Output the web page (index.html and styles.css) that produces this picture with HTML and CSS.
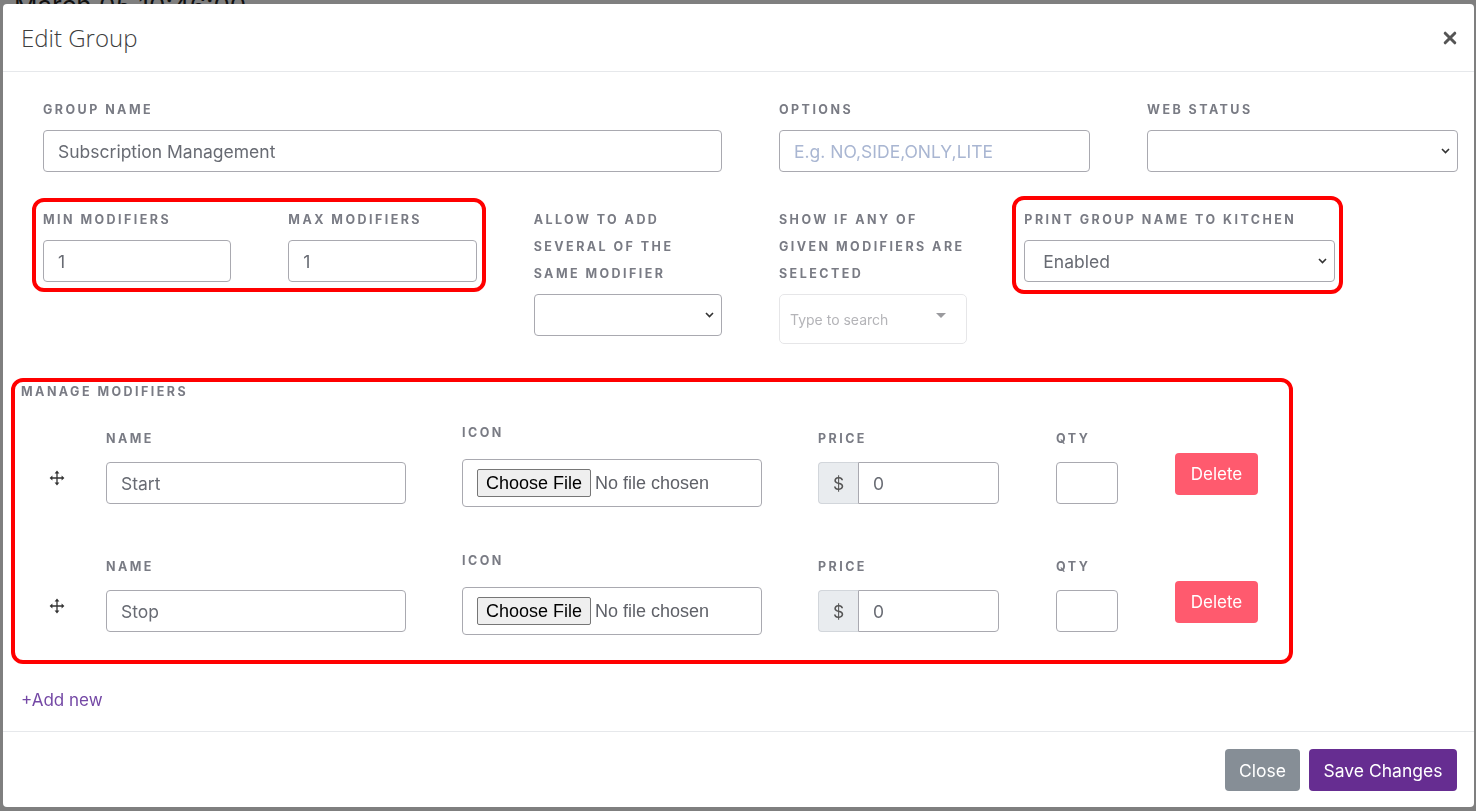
FILE: index.html
```html
<!DOCTYPE html>
<html lang="en">
<head>
<meta charset="utf-8">
<title>Edit Group</title>
<link rel="stylesheet" href="styles.css">
</head>
<body>
<div class="page">
  <div class="page-time">March 05 10:46:00</div>
</div>

<div class="modal">
  <div class="modal-header">
    <h5 class="modal-title">Edit Group</h5>
    <button class="close-x" type="button" aria-label="Close">
      <svg width="14" height="14" viewBox="0 0 14 14"><path d="M2.2 2.2L11.8 11.8M11.8 2.2L2.2 11.8" stroke="#555" stroke-width="3" stroke-linecap="round"/></svg>
    </button>
  </div>

  <div class="modal-body">
    <div class="form-grid">
      <div class="field span-6">
        <div class="lbl">GROUP NAME</div>
        <div class="input">Subscription Management</div>
      </div>
      <div class="field span-3">
        <div class="lbl">OPTIONS</div>
        <div class="input placeholder">E.g. NO,SIDE,ONLY,LITE</div>
      </div>
      <div class="field span-3">
        <div class="lbl">WEB STATUS</div>
        <div class="input select"><span></span><svg class="chev" width="9" height="6" viewBox="0 0 9 6"><path d="M1 1l3.5 3.5L8 1" stroke="#333" stroke-width="1.6" fill="none"/></svg></div>
      </div>

      <div class="hl hl-minmax span-4">
        <div class="field">
          <div class="lbl">MIN MODIFIERS</div>
          <div class="input">1</div>
        </div>
        <div class="field">
          <div class="lbl">MAX MODIFIERS</div>
          <div class="input">1</div>
        </div>
      </div>
      <div class="field span-2">
        <div class="lbl nowrap">ALLOW TO ADD<br>SEVERAL OF THE<br>SAME MODIFIER</div>
        <div class="input select"><span></span><svg class="chev" width="9" height="6" viewBox="0 0 9 6"><path d="M1 1l3.5 3.5L8 1" stroke="#333" stroke-width="1.6" fill="none"/></svg></div>
      </div>
      <div class="field span-2">
        <div class="lbl nowrap">SHOW IF ANY OF<br>GIVEN MODIFIERS ARE<br>SELECTED</div>
        <div class="search-box"><span>Type to search</span><span class="tri"></span></div>
      </div>
      <div class="hl hl-print span-3">
        <div class="field">
          <div class="lbl">PRINT GROUP NAME TO KITCHEN</div>
          <div class="input select select-en"><span>Enabled</span><svg class="chev" width="9" height="6" viewBox="0 0 9 6"><path d="M1 1l3.5 3.5L8 1" stroke="#333" stroke-width="1.6" fill="none"/></svg></div>
        </div>
      </div>
    </div>

    <div class="manage">
      <div class="lbl lbl-manage">MANAGE MODIFIERS</div>
      <div class="mod-list">
        <div class="mod-row">
          <svg class="drag" width="16" height="16" viewBox="0 0 16 16"><path d="M8 2.5v11M2.5 8h11" stroke="#333" stroke-width="1.3"/><path d="M8 0.6L5.6 3.4h4.8zM8 15.4l-2.4-2.8h4.8zM0.6 8l2.8-2.4v4.8zM15.4 8l-2.8-2.4v4.8z" fill="#333"/></svg>
          <div class="m-name">
            <div class="lbl lbl-sm">NAME</div>
            <div class="input">Start</div>
          </div>
          <div class="m-icon">
            <div class="lbl lbl-icon">ICON</div>
            <div class="file-box"><span class="file-btn">Choose File</span><span class="file-txt">No file chosen</span></div>
          </div>
          <div class="m-price">
            <div class="lbl lbl-sm">PRICE</div>
            <div class="input-group"><span class="addon">$</span><div class="input ig">0</div></div>
          </div>
          <div class="m-qty">
            <div class="lbl lbl-sm">QTY</div>
            <div class="input"></div>
          </div>
          <button class="btn btn-del" type="button">Delete</button>
        </div>

        <div class="mod-row">
          <svg class="drag" width="16" height="16" viewBox="0 0 16 16"><path d="M8 2.5v11M2.5 8h11" stroke="#333" stroke-width="1.3"/><path d="M8 0.6L5.6 3.4h4.8zM8 15.4l-2.4-2.8h4.8zM0.6 8l2.8-2.4v4.8zM15.4 8l-2.8-2.4v4.8z" fill="#333"/></svg>
          <div class="m-name">
            <div class="lbl lbl-sm">NAME</div>
            <div class="input">Stop</div>
          </div>
          <div class="m-icon">
            <div class="lbl lbl-icon">ICON</div>
            <div class="file-box"><span class="file-btn">Choose File</span><span class="file-txt">No file chosen</span></div>
          </div>
          <div class="m-price">
            <div class="lbl lbl-sm">PRICE</div>
            <div class="input-group"><span class="addon">$</span><div class="input ig">0</div></div>
          </div>
          <div class="m-qty">
            <div class="lbl lbl-sm">QTY</div>
            <div class="input"></div>
          </div>
          <button class="btn btn-del" type="button">Delete</button>
        </div>
      </div>
    </div>

    <a class="add-new" href="#">+Add new</a>
  </div>

  <div class="modal-footer">
    <button class="btn btn-close" type="button">Close</button>
    <button class="btn btn-save" type="button">Save Changes</button>
  </div>
</div>
</body>
</html>
```

FILE: styles.css
```css
* { box-sizing: border-box; }
html, body { margin: 0; padding: 0; }
body {
  width: 1476px;
  height: 811px;
  overflow: hidden;
  background: #7f7f7f;
  font-family: Inter, "Noto Sans", sans-serif;
}

.page { padding-left: 14px; }
.page-time {
  font-size: 26px;
  line-height: 30px;
  margin-top: -9px;
  color: #111;
}

.modal {
  position: fixed;
  left: 3px;
  top: 4px;
  width: 1471px;
  height: 803px;
  background: #fff;
  border-radius: 4px;
  display: flex;
  flex-direction: column;
}

.modal-header {
  height: 68px;
  flex: none;
  border-bottom: 1px solid #e6e8eb;
  display: flex;
  align-items: center;
  justify-content: space-between;
  padding: 0 17px 0 18px;
}
.modal-title {
  margin: 0;
  font-family: "Open Sans", sans-serif;
  font-weight: 300;
  font-size: 24px;
  color: #3d3d3d;
}
.close-x {
  border: 0;
  background: none;
  padding: 0;
  width: 14px;
  height: 14px;
  display: flex;
}

.modal-body {
  flex: 1;
  padding: 23.5px 0 0 0;
}

.form-grid {
  margin-left: 40px;
  width: 1415px;
  display: grid;
  grid-template-columns: repeat(12, 1fr);
  column-gap: 57px;
  row-gap: 33.5px;
  align-items: start;
}
.span-2 { grid-column: span 2; }
.span-3 { grid-column: span 3; }
.span-4 { grid-column: span 4; }
.span-6 { grid-column: span 6; }

.lbl {
  font-weight: 700;
  font-size: 12.5px;
  line-height: 27px;
  letter-spacing: 2.45px;
  color: #797b84;
  margin-bottom: 7.5px;
}
.nowrap { white-space: nowrap; }

.input {
  height: 42px;
  border: 1px solid #a9a9b0;
  border-radius: 4px;
  padding: 0 14px;
  display: flex;
  align-items: center;
  font-size: 17.5px;
  color: #686b73;
  background: #fff;
}
.placeholder { color: #a9b6d2; }
.select {
  justify-content: space-between;
  padding-right: 7px;
}
.select-en { padding-left: 18px; }

.search-box {
  height: 50px;
  border: 1px solid #e6e6e8;
  border-radius: 5px;
  padding: 0 20px 0 10px;
  display: flex;
  align-items: center;
  justify-content: space-between;
  font-size: 14px;
  color: #b4b4b8;
}
.tri {
  width: 0;
  height: 0;
  border-left: 5px solid transparent;
  border-right: 5px solid transparent;
  border-top: 5px solid #9a9a9e;
  margin-top: -7px;
}

.hl {
  border: 4px solid #ff0000;
  border-radius: 12px;
}
.hl-minmax {
  display: grid;
  grid-template-columns: 1fr 1fr;
  column-gap: 57px;
  margin: -8px -9px -10px -11px;
  padding: 4px 5px 6px 7px;
}
.hl-print {
  grid-column: 9 / span 3;
  margin: -9.5px -8px -12px -12.5px;
  padding: 5.5px 4px 8px 8.5px;
}

.manage {
  margin: 34px 0 0 8px;
  width: 1282px;
  border: 4px solid #ff0000;
  border-radius: 12px;
  padding: 3px 0 25px 6px;
}
.lbl-manage {
  line-height: 14px;
  margin-bottom: 0;
}
.mod-list {
  margin-top: 19.5px;
  display: flex;
  flex-direction: column;
  gap: 39.5px;
}
.mod-row {
  display: flex;
  align-items: flex-start;
}
.drag {
  flex: none;
  margin: 51.5px 0 0 28px;
}
.m-name { width: 300px; margin: 6px 0 0 41px; }
.m-icon { width: 300px; margin-left: 56px; }
.m-price { width: 181px; margin: 6px 0 0 56px; }
.m-qty { width: 62px; margin: 6px 0 0 57px; }
.lbl-sm { margin-bottom: 10.5px; }
.lbl-icon { margin-bottom: 13.5px; }

.file-box {
  height: 48px;
  border: 1px solid #a9a9b0;
  border-radius: 4px;
  padding: 0 14px;
  display: flex;
  align-items: center;
  font-family: "Liberation Sans", Arial, sans-serif;
  font-size: 18px;
}
.file-btn {
  height: 28px;
  width: 114px;
  border: 1px solid #767676;
  border-radius: 2px;
  background: #efefef;
  color: #000;
  display: flex;
  align-items: center;
  justify-content: center;
  margin-right: 4px;
}
.file-txt { color: #5f6168; }

.input-group { display: flex; height: 42px; }
.addon {
  width: 40px;
  flex: none;
  background: #e9ecef;
  border: 1px solid #d2d6db;
  border-right: 0;
  border-radius: 4px 0 0 4px;
  display: flex;
  align-items: center;
  justify-content: center;
  font-size: 17.5px;
  color: #555;
}
.input.ig {
  flex: 1;
  border-radius: 0 4px 4px 0;
}

.btn {
  border: 0;
  border-radius: 4px;
  color: #fff;
  font-family: Inter, "Noto Sans", sans-serif;
  height: 42px;
  padding: 0;
  display: flex;
  align-items: center;
  justify-content: center;
}
.btn-del {
  width: 83px;
  margin: 34.5px 0 0 57px;
  background: #ff5a6e;
  font-size: 17px;
}

.add-new {
  display: block;
  width: max-content;
  margin: 24px 0 0 18px;
  font-size: 17px;
  line-height: 24px;
  color: #7448a5;
  text-decoration: none;
}

.modal-footer {
  flex: none;
  border-top: 1px solid #e6e8eb;
  padding: 17px 17px 16px;
  display: flex;
  justify-content: flex-end;
  gap: 9px;
}
.btn-close {
  width: 75px;
  background: #868e96;
  font-size: 17.5px;
}
.btn-save {
  width: 148px;
  background: #662d91;
  font-size: 17.5px;
}
```
